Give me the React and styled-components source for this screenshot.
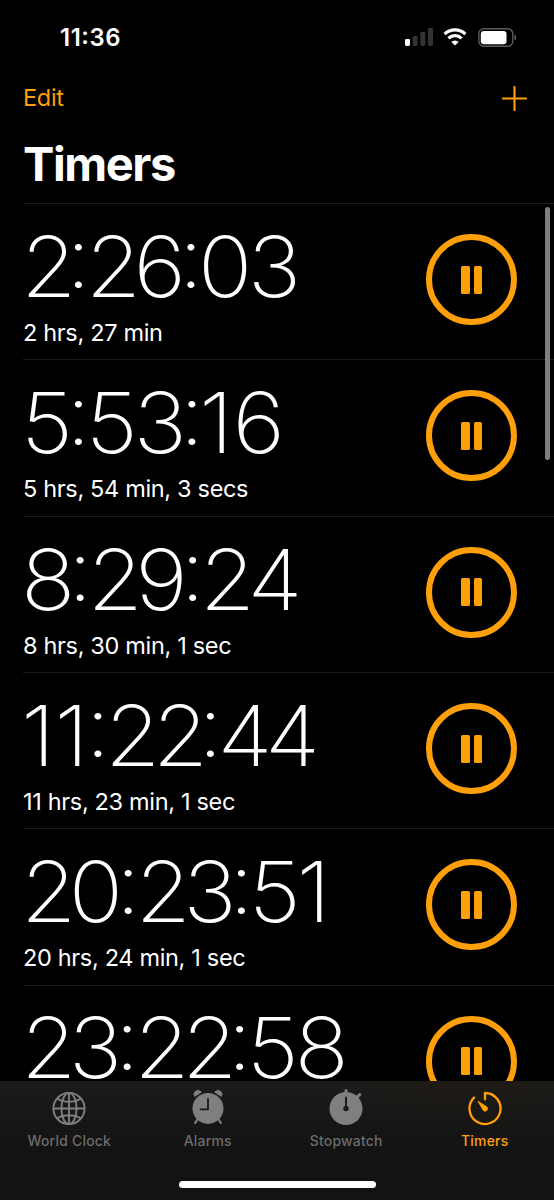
import React, { useState } from 'react';
import styled, { createGlobalStyle } from "styled-components";

const GlobalStyle = createGlobalStyle`
  body {
    margin: 0;
    background: #000000;
    font-family: Inter, "Liberation Sans", sans-serif;
    -webkit-font-smoothing: antialiased;
  }

  button {
    font: inherit;
    padding: 0;
    border: none;
    background: none;
    cursor: pointer;
  }
`;

const Screen = styled.div`
  position: relative;
  display: flex;
  flex-direction: column;
  width: 554px;
  height: 1200px;
  overflow: hidden;
  background: #000000;
  color: #ffffff;
`;

const StatusBar = styled.div`
  display: flex;
  align-items: center;
  justify-content: space-between;
  box-sizing: border-box;
  height: 74px;
  padding: 0 37px 0 60px;
`;

const Clock = styled.span`
  font-size: 23.8px;
  font-weight: 600;
  letter-spacing: 0.6px;
`;

const ClockColon = styled.span`
  line-height: 0;
  vertical-align: 2px;
`;

const StatusIcons = styled.div`
  display: flex;
  align-items: center;
  gap: 10.5px;

  svg {
    display: block;
  }

  svg:nth-child(2) {
    margin: 0 0.5px 0 -0.5px;
  }
`;

const NavBar = styled.div`
  display: flex;
  align-items: center;
  justify-content: space-between;
  box-sizing: border-box;
  height: 48px;
  padding: 0 27px 0 23px;
`;

const NavButton = styled.button`
  height: 28px;
  color: #ff9f0a;
  font-size: 23.5px;
  line-height: 28px;
  letter-spacing: -0.3px;

  svg {
    display: block;
    margin-top: 1px;
  }
`;

const Title = styled.h1`
  box-sizing: border-box;
  height: 81.15px;
  margin: 0;
  padding: 13px 23px 0;
  font-size: 47px;
  font-weight: 700;
  line-height: 57px;
  letter-spacing: -1.45px;
`;

const List = styled.div`
  flex: 1;
  min-height: 0;
  overflow: hidden;
  padding-left: 23px;
`;

const Row = styled.div`
  display: flex;
  justify-content: space-between;
  align-items: flex-start;
  box-sizing: border-box;
  height: 156.3px;
  padding-right: 37px;
  border-top: 1px solid #1c1c1e;
`;

const Time = styled.div`
  margin-top: 20.8px;
  margin-left: -1.8px;
  font-size: 84px;
  font-weight: 250;
  line-height: 84px;
  white-space: nowrap;
  transform: scaleX(1.07);
  transform-origin: left;
`;

const Digit = styled.span`
  letter-spacing: ${({ $tracking }) => $tracking}px;
`;

// sits at the middle of the digits, not on the baseline
const Colon = styled.span`
  margin: 0 -4.9px 0 -2.5px;
  line-height: 0;
  vertical-align: 8.5px;
`;

const Duration = styled.div`
  margin-top: 10px;
  font-size: 23.5px;
  line-height: 28px;
  letter-spacing: -0.33px;
`;

const PauseButton = styled.button`
  display: flex;
  align-items: center;
  justify-content: center;
  gap: 4px;
  box-sizing: border-box;
  width: 91px;
  height: 91px;
  margin-top: 30px;
  border: 6px solid #ff9f0a;
  border-radius: 50%;
`;

const PauseBar = styled.span`
  width: 8.3px;
  height: 28px;
  border-radius: 1.5px;
  background: #ff9f0a;
`;

const ScrollThumb = styled.div`
  position: absolute;
  top: 207px;
  right: 4px;
  width: 5px;
  height: 253px;
  border-radius: 3px;
  background: #7f7f7f;
`;

const Footer = styled.div`
  display: flex;
  flex-direction: column;
  align-items: center;
  justify-content: space-between;
  box-sizing: border-box;
  height: 119px;
  padding-bottom: 12px;
  background: radial-gradient(ellipse 150px 50px at 470px 0, #1e1a14, transparent),
    linear-gradient(#1b1b1b, #131313 60%);
`;

const Tabs = styled.div`
  display: grid;
  grid-template-columns: repeat(4, 1fr);
  width: 100%;
`;

const Tab = styled.button`
  display: flex;
  flex-direction: column;
  align-items: center;
  padding-top: 5px;
  color: ${({ $active }) => ($active ? '#ff9f0a' : '#7f7f7f')};

  svg {
    display: block;
  }
`;

const TabLabel = styled.span`
  margin-top: 5px;
  color: ${({ $active }) => ($active ? '#ff9f0a' : '#6c6c6c')};
  font-size: 13.9px;
  font-weight: 500;
  line-height: 20px;
  letter-spacing: 0.25px;
`;

const HomeIndicator = styled.div`
  width: 197px;
  height: 7px;
  border-radius: 4px;
  background: #ffffff;
`;

const SignalIcon = () => (
  <svg width="28" height="18" viewBox="0 0 28 18">
    <rect x="0" y="11" width="5" height="7" rx="1.4" fill="#ffffff" />
    <rect x="7.7" y="8" width="5" height="10" rx="1.4" fill="#333333" />
    <rect x="15.3" y="4" width="5" height="14" rx="1.4" fill="#333333" />
    <rect x="23" y="0" width="5" height="18" rx="1.4" fill="#333333" />
  </svg>
);

const WifiIcon = () => (
  <svg width="24" height="18" viewBox="0 0 24 18" fill="none">
    <path d="M1.6 6.1a15 15 0 0 1 20.8 0" stroke="#ffffff" strokeWidth="3.2" />
    <path d="M5.5 10.3a9.4 9.4 0 0 1 13 0" stroke="#ffffff" strokeWidth="3.2" />
    <path d="M12 17.6 8.3 13.9a5.3 5.3 0 0 1 7.4 0Z" fill="#ffffff" />
  </svg>
);

const BatteryIcon = () => (
  <svg width="39" height="19" viewBox="0 0 39 19">
    <rect x="0.8" y="0.8" width="34" height="17.4" rx="5" fill="none" stroke="#5c5c5c" strokeWidth="1.4" />
    <rect x="2.8" y="2.9" width="25.7" height="13.3" rx="3" fill="#ffffff" />
    <path d="M36.5 6.6c2.3 1 2.3 4.8 0 5.8Z" fill="#666666" />
  </svg>
);

const PlusIcon = () => (
  <svg width="25" height="25" viewBox="0 0 25 25" stroke="#ff9f0a" strokeWidth="2.1" strokeLinecap="round">
    <path d="M12.5 1v23M1 12.5h23" />
  </svg>
);

const GlobeIcon = () => (
  <svg width="36" height="40" viewBox="0 0 36 40" fill="none" stroke="currentColor" strokeWidth="1.9">
    <circle cx="18" cy="22.5" r="15.6" />
    <ellipse cx="18" cy="22.5" rx="7.6" ry="15.6" />
    <path d="M18 6.9v31.2M2.4 22.5h31.2M6 12.5c6.4 4.4 17.6 4.4 24 0M6 32.5c6.4-4.4 17.6-4.4 24 0" />
  </svg>
);

const AlarmIcon = () => (
  <svg width="36" height="40" viewBox="0 0 36 40">
    <circle cx="18" cy="22.4" r="15.5" fill="currentColor" />
    <path d="M7 34 5.2 36.8M29 34l1.8 2.8" stroke="currentColor" strokeWidth="2.2" strokeLinecap="round" />
    <path d="M4.5 10.4C2.6 5.4 7.6 2.8 11.3 6ZM31.5 10.4C33.4 5.4 28.4 2.8 24.7 6Z" fill="currentColor" stroke="currentColor" strokeLinejoin="round" />
    <path d="M18 13V23.3H10.5" fill="none" stroke="#191919" strokeWidth="1.8" strokeLinecap="round" strokeLinejoin="round" />
  </svg>
);

const StopwatchIcon = () => (
  <svg width="36" height="40" viewBox="0 0 36 40">
    <circle cx="18" cy="22.5" r="16.5" fill="currentColor" />
    <path d="M18 4.4V9M29.5 10.6l2.2-1.9" stroke="currentColor" strokeWidth="3" strokeLinecap="round" />
    <path d="M18 11.4v10" stroke="#191919" strokeWidth="1.9" strokeLinecap="round" />
    <circle cx="18" cy="22.5" r="2.7" fill="#191919" />
  </svg>
);

const TimerIcon = () => (
  <svg width="36" height="40" viewBox="0 0 36 40">
    <path
      d="M18 13.4V7A15.5 15.5 0 1 1 7 11.6"
      fill="none"
      stroke="currentColor"
      strokeWidth="2.3"
      strokeLinecap="round"
      strokeLinejoin="round"
    />
    <path d="M10.9 15.2 19.9 20.9A2.5 2.5 0 1 1 16.3 24.4Z" fill="currentColor" stroke="currentColor" strokeWidth="0.8" strokeLinejoin="round" />
  </svg>
);

const timers = [
  { time: '2:26:03', duration: '2 hrs, 27 min' },
  { time: '5:53:16', duration: '5 hrs, 54 min, 3 secs' },
  { time: '8:29:24', duration: '8 hrs, 30 min, 1 sec' },
  { time: '11:22:44', duration: '11 hrs, 23 min, 1 sec' },
  { time: '20:23:51', duration: '20 hrs, 24 min, 1 sec' },
  { time: '23:22:58', duration: '23 hrs, 23 min, 1 sec' },
];

const tabs = [
  { label: 'World Clock', Icon: GlobeIcon },
  { label: 'Alarms', Icon: AlarmIcon },
  { label: 'Stopwatch', Icon: StopwatchIcon },
  { label: 'Timers', Icon: TimerIcon },
];

// space after each digit, the others use -4.5
const tracking = { 0: -4.3, 1: -0.6, 2: -7.2, 4: -7, 5: -3.9 };

const TimerRow = ({ timer }) => (
  <Row>
    <div>
      <Time>
        {timer.time.split('').map((char, i) =>
          char === ':'
            ? <Colon key={i}>:</Colon>
            : <Digit key={i} $tracking={tracking[char] ?? -4.5}>{char}</Digit>
        )}
      </Time>
      <Duration>{timer.duration}</Duration>
    </div>
    <PauseButton type="button">
      <PauseBar />
      <PauseBar />
    </PauseButton>
  </Row>
);

const App = () => {
  const [active, setActive] = useState('Timers');

  return (
    <Screen>
      <GlobalStyle />
      <StatusBar>
        <Clock>11<ClockColon>:</ClockColon>36</Clock>
        <StatusIcons>
          <SignalIcon />
          <WifiIcon />
          <BatteryIcon />
        </StatusIcons>
      </StatusBar>
      <NavBar>
        <NavButton type="button">Edit</NavButton>
        <NavButton type="button"><PlusIcon /></NavButton>
      </NavBar>
      <Title>Timers</Title>
      <List>
        {timers.map((timer) => (
          <TimerRow key={timer.time} timer={timer} />
        ))}
      </List>
      <ScrollThumb />
      <Footer>
        <Tabs>
          {tabs.map(({ label, Icon }) => (
            <Tab key={label} type="button" $active={active === label} onClick={() => setActive(label)}>
              <Icon />
              <TabLabel $active={active === label}>{label}</TabLabel>
            </Tab>
          ))}
        </Tabs>
        <HomeIndicator />
      </Footer>
    </Screen>
  );
};

export default App;
